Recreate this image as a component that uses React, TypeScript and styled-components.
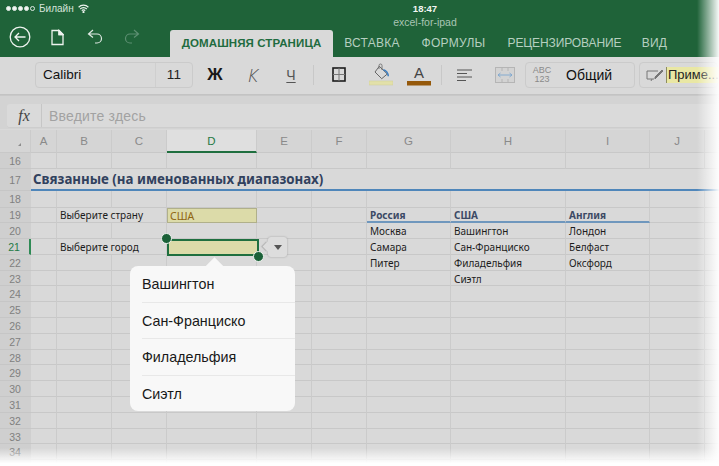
import React from "react";
import styled, { createGlobalStyle } from "styled-components";

const Global = createGlobalStyle`
  html, body { margin: 0; padding: 0; background: #fff; }
  body { width: 719px; height: 466px; overflow: hidden; font-family: "Liberation Sans", Arial, sans-serif; }
`;
const CELL_FONT = `"Noto Sans", "Open Sans", sans-serif`;

const Page = styled.div`
  position: relative; width: 719px; height: 466px; overflow: hidden; background: #d9d9d9;
  display: flex; flex-direction: column;
`;
const Header = styled.header`
  background: #1f6339; height: 57px; flex: none; color: #fff; display: flex; flex-direction: column;
`;
const StatusBar = styled.div`
  display: grid; grid-template-columns: 360px 130px; height: 29px; flex: none;
`;
const Carrier = styled.div`
  display: flex; align-items: center; gap: 4px; height: 17px; padding-left: 6px; font-size: 10px; color: #d5e3da;
`;
const Dots = styled.span`display: inline-flex; gap: 1px;`;
const Dot = styled.i<{ $empty?: boolean }>`
  width: 5px; height: 5px; border-radius: 50%; box-sizing: border-box; display: block;
  background: ${p => (p.$empty ? "transparent" : "#f2f6f3")};
  border: 1px solid #dfe9e3;
`;
const Center = styled.div`
  display: flex; flex-direction: column; align-items: center; padding-top: 3px;
`;
const Time = styled.div`font-size: 9.5px; line-height: 11px; font-weight: 700; color: #f3f7f4;`;
const DocName = styled.div`font-size: 10.5px; line-height: 13px; color: #a9c5b4; margin-top: 2px;`;
const ToolRow = styled.div`
  display: flex; align-items: flex-end; flex: 1; min-height: 0;
`;
const Tools = styled.div`
  display: flex; align-items: center; width: 170px; height: 28px; flex: none; padding-left: 9px; box-sizing: border-box; position: relative; top: -6px;
`;
const ToolIcon = styled.svg<{ $w: number; $mr: number }>`
  width: ${p => p.$w}px; height: 22px; margin-right: ${p => p.$mr}px; flex: none; display: block;
`;
const Tabs = styled.nav`display: flex; align-items: flex-end; height: 28px;`;
const Tab = styled.div<{ $active?: boolean; $w: number; $sp?: number }>`
  width: ${p => p.$w}px; height: 27px; box-sizing: border-box; display: flex; align-items: center; justify-content: center;
  font-size: ${p => (p.$active ? 11.5 : 12)}px; white-space: nowrap; letter-spacing: ${p => p.$sp ?? 0.25}px;
  border-radius: 3px 3px 0 0; padding-bottom: 1px;
  color: ${p => (p.$active ? "#1f6c40" : "#b6cfc0")};
  background: ${p => (p.$active ? "#d9d9d9" : "transparent")};
  font-weight: ${p => (p.$active ? 700 : 400)};
`;
const Ribbon = styled.div`
  height: 38px; flex: none; box-sizing: border-box; background: #d9d9d9; border-bottom: 1px solid #c3c3c3;
  display: flex; align-items: center; padding-left: 35px; padding-bottom: 2px; white-space: nowrap;
`;
const RBox = styled.div<{ $w: number; $ml?: number }>`
  width: ${p => p.$w}px; height: 26px; box-sizing: border-box; flex: none; border: 1px solid #cbcbcb; border-radius: 4px;
  display: flex; align-items: center; font-size: 13.5px; color: #111; margin-left: ${p => p.$ml ?? 0}px;
`;
const FontName = styled.span`width: 120px; padding-left: 7px; box-sizing: border-box; height: 100%; display: flex; align-items: center; border-right: 1px solid #cfcfcf;`;
const FontSize = styled.span`flex: 1; text-align: center; color: #222; letter-spacing: .3px;`;
const Glyph = styled.span<{ $w: number; $kind: "b" | "i" | "u" }>`
  width: ${p => p.$w}px; flex: none; text-align: center; line-height: 20px;
  font-size: ${p => (p.$kind === "u" ? 14 : p.$kind === "i" ? 18 : 17)}px;
  font-family: ${p => (p.$kind === "i" ? `"Open Sans", sans-serif` : "inherit")};
  font-weight: ${p => (p.$kind === "b" ? 700 : 300)};
  font-style: ${p => (p.$kind === "i" ? "italic" : "normal")};
  text-decoration: ${p => (p.$kind === "u" ? "underline" : "none")};
  text-underline-offset: 2px;
  color: ${p => (p.$kind === "b" ? "#1a1a1a" : "#555")};
`;
const VLine = styled.i<{ $ml: number; $mr: number }>`
  display: block; flex: none; width: 1px; height: 20px; background: #c8c8c8; margin: 0 ${p => p.$mr}px 0 ${p => p.$ml}px;
`;
const RIcon = styled.svg<{ $w: number; $ml?: number; $mr?: number }>`
  width: ${p => p.$w}px; height: 26px; flex: none; display: block;
  margin-left: ${p => p.$ml ?? 0}px; margin-right: ${p => p.$mr ?? 0}px;
`;
const AbcStack = styled.span`
  display: flex; flex-direction: column; align-items: center; width: 16px; margin-left: 8px; font-size: 9px; line-height: 8.5px; color: #8a8a8a;
`;
const General = styled.span`margin-left: 16px; font-size: 14px; color: #111;`;
const StyleName = styled.span`
  margin-left: 1px; background: #e9e7a4; font-size: 13px; line-height: 16px; color: #222; padding: 0 0 0 1px; border-left: 1px solid #8d8d60; flex: 1;
`;
const FormulaBar = styled.div`
  height: 34px; flex: none; box-sizing: border-box; background: #d3d3d3; padding: 8px 0 1px 7px; border-top: 1px solid #c8c8c8; display: flex;
`;
const FormulaBox = styled.div`
  flex: 1; background: #dadada; border-radius: 3px 0 0 3px; display: flex; align-items: center; border-bottom: 1px solid #cdcdcd;
`;
const Fx = styled.span`
  width: 35px; text-align: center; font-family: "Liberation Serif", serif; font-style: italic; font-size: 16px; color: #444;
  border-right: 1px solid #c6c6c6; height: 100%; line-height: 23px; box-sizing: border-box;
`;
const Placeholder = styled.span`margin-left: 7px; font-size: 14px; color: #a2a2a2; letter-spacing: .2px;`;

const Sheet = styled.div`
  display: grid; flex: none; margin-top: 1px;
  grid-template-columns: 31px 26px 55px 55px 90px 55px 55px 84px 115px 84px 55px 55px;
  grid-template-rows: 23px 15.5px 22.5px 16.5px repeat(17, 15.8px);
  font-family: ${CELL_FONT};
`;
const Col = styled.div<{ $on?: boolean }>`
  display: flex; align-items: center; justify-content: center; font-family: "Liberation Sans", sans-serif; font-size: 11.5px;
  box-sizing: border-box; border-right: 1px solid #cbcbcb;
  background: ${p => (p.$on ? "#dfdfdf" : "#d5d5d5")};
  color: ${p => (p.$on ? "#1f7a45" : "#8a8a8a")};
  border-bottom: ${p => (p.$on ? "2px solid #1f6f3f" : "1px solid #c8c8c8")};
`;
const Corner = styled(Col)`position: relative; background: #d5d5d5;`;
const CornerMark = styled.i`
  position: absolute; right: 9px; bottom: 6px; width: 0; height: 0; border-left: 3px solid transparent; border-bottom: 3px solid #8c8c8c;
`;
const RowNum = styled.div<{ $on?: boolean }>`
  display: flex; align-items: center; justify-content: center; font-family: "Liberation Sans", sans-serif; font-size: 10.5px;
  box-sizing: border-box; background: #cfcfcf; border-bottom: 1px solid #c6c6c6; padding: 1px 1px 0 0;
  color: ${p => (p.$on ? "#1f7a45" : "#808080")};
  border-right: ${p => (p.$on ? "2px solid #2f8a55" : "none")};
  height: 100%;
`;
const Cell = styled.div<{ $fill?: boolean; $title?: boolean; $line?: boolean; $noRight?: boolean; $head?: boolean; $gold?: boolean }>`
  box-sizing: border-box; min-width: 0; display: flex; align-items: center; white-space: nowrap; padding: 1px 0 0 3px;
  font-size: 10px; color: #1c1c1c;
  border-right: ${p => (p.$noRight ? "none" : "1px solid #cbcbcb")};
  border-bottom: 1px solid #c8c8c8;
  ${p => p.$fill && "background: #dcdba9; border: 1px solid #b0b08a;"}
  ${p => p.$gold && "color: #8f6510; font-size: 10.5px; padding-left: 2px;"}
  ${p => p.$head && "font-weight: 700; color: #3c4a65;"}
  ${p => p.$line && "border-bottom: 2px solid #6f97bd;"}
  ${p => p.$title && "font-weight: 700; font-size: 13.3px; color: #31415e; padding: 0 0 0 2px;"}
`;
const TitleCell = styled(Cell)`border-bottom: 2px solid #4f86ba; border-right: none;`;

const Selection = styled.div`
  position: absolute; left: 167px; top: 239px; width: 92px; height: 17px; box-sizing: border-box;
  border: 2px solid #1f6f3f; background: #dcdba9;
`;
const Handle = styled.i<{ $x: number; $y: number }>`
  position: absolute; left: ${p => p.$x}px; top: ${p => p.$y}px; width: 11px; height: 11px; box-sizing: border-box; border-radius: 50%;
  background: #1b6138; border: 1.5px solid #eef3ef;
`;
const DropBtn = styled.div`
  position: absolute; left: 268px; top: 237px; width: 19px; height: 20px; box-sizing: border-box; background: #dddddd; border-radius: 3px;
  box-shadow: 0 0 2px #9c9c9c; display: flex; align-items: center; justify-content: center;
  &::before {
    content: ""; position: absolute; left: -4px; top: 6px; width: 7px; height: 7px; background: #dddddd; transform: rotate(45deg);
    box-shadow: -1px 1px 1px #b0b0b0;
  }
  &::after { content: ""; position: relative; width: 0; height: 0; border: 4px solid transparent; border-top: 5px solid #555; border-bottom: 0; }
`;
const Popover = styled.ul`
  position: absolute; left: 130px; top: 266px; width: 165px; height: 145px; margin: 0; padding: 0; list-style: none;
  background: #f8f8f8; border-radius: 8px; display: flex; flex-direction: column; font-size: 14.3px; color: #181818;
  &::before {
    content: ""; position: absolute; left: 78px; top: -6px; width: 13px; height: 13px; background: #f8f8f8; transform: rotate(45deg);
  }
`;
const PopItem = styled.li`
  flex: 1; display: flex; align-items: center; margin-left: 12px; padding-top: 1px; position: relative; border-bottom: 1px solid #e8e8e8;
  &:last-child { border-bottom: none; }
`;
const FadeRight = styled.div`
  position: absolute; right: 0; top: 0; bottom: 0; width: 22px; background: linear-gradient(to right, rgba(255,255,255,0), rgba(255,255,255,0.97));
`;
const FadeBottom = styled.div`
  position: absolute; left: 0; right: 0; bottom: 0; height: 18px; background: linear-gradient(to bottom, rgba(255,255,255,0), #fff 85%);
`;

const cols = ["A", "B", "C", "D", "E", "F", "G", "H", "I", "J", ""];
const rows = Array.from({ length: 20 }, (_, i) => 16 + i);
type C = { t: string; head?: boolean };
const data: Record<string, C> = {
  "19B": { t: "Выберите страну" },
  "21B": { t: "Выберите город" },
  "19D": { t: "США" },
  "19G": { t: "Россия", head: true }, "19H": { t: "США", head: true }, "19I": { t: "Англия", head: true },
  "20G": { t: "Москва" }, "20H": { t: "Вашингтон" }, "20I": { t: "Лондон" },
  "21G": { t: "Самара" }, "21H": { t: "Сан-Франциско" }, "21I": { t: "Белфаст" },
  "22G": { t: "Питер" }, "22H": { t: "Филадельфия" }, "22I": { t: "Оксфорд" },
  "23H": { t: "Сиэтл" },
};
const cities = ["Вашингтон", "Сан-Франциско", "Филадельфия", "Сиэтл"];

const renderCell = (r: number, c: string) => {
  const key = `${r}${c}`;
  if (r === 17) return <TitleCell key={key} $title={c === "A"}>{c === "A" ? "Связанные (на именованных диапазонах)" : ""}</TitleCell>;
  const d = data[key];
  const inLine = r === 19 && (c === "G" || c === "H" || c === "I");
  return (
    <Cell key={key} $fill={key === "19D"} $gold={key === "19D"} $head={d?.head} $line={inLine}
      $noRight={c === "B" && (r === 19 || r === 21)}>
      {d?.t}
    </Cell>
  );
};

export default function App() {
  return (
    <Page>
      <Global />
      <Header>
        <StatusBar>
          <Carrier>
            <Dots><Dot /><Dot /><Dot /><Dot /><Dot $empty /></Dots>
            <span>Билайн</span>
            <svg width="11" height="9" viewBox="0 0 11 9" fill="none" stroke="#eef3ef" strokeWidth="1.2">
              <path d="M.6 3.2a7 7 0 0 1 9.8 0M2.2 5a4.6 4.6 0 0 1 6.6 0M3.8 6.7a2.2 2.2 0 0 1 3.4 0" />
              <circle cx="5.5" cy="8" r=".5" fill="#eef3ef" />
            </svg>
          </Carrier>
          <Center><Time>18:47</Time><DocName>excel-for-ipad</DocName></Center>
        </StatusBar>
        <ToolRow>
          <Tools>
            <ToolIcon $w={22} $mr={20} viewBox="0 0 22 22" fill="none" stroke="#eef3ef" strokeWidth="1.3">
              <circle cx="11" cy="11" r="9.8" />
              <path d="M16.500 11H6M10 7 6 11l4 4" />
            </ToolIcon>
            <ToolIcon $w={13} $mr={23} viewBox="0 0 13 22" fill="none" stroke="#eef3ef" strokeWidth="1.3">
              <path d="M1 4.500h7l4 4v10H1zM8 4.500v4h4" fill="none" />
              <path d="M8 4.500l4 4H8z" fill="#eef3ef" />
            </ToolIcon>
            <ToolIcon $w={16} $mr={21} viewBox="0 0 16 22" fill="none" stroke="#dfe9e3" strokeWidth="1.2">
              <path d="M6 4 1.500 8 6 11.500M1.500 8H10a4.500 4.500 0 0 1 4.500 4.500v0A4.500 4.500 0 0 1 10 17H8" />
            </ToolIcon>
            <ToolIcon $w={16} $mr={0} viewBox="0 0 16 22" fill="none" stroke="#5d8f72" strokeWidth="1.2">
              <path d="M10 4l4.500 4L10 11.500M14.500 8H6A4.500 4.500 0 0 0 1.500 12.500v0A4.500 4.500 0 0 0 6 17h2" />
            </ToolIcon>
          </Tools>
          <Tabs>
            <Tab $active $w={163} $sp={0.1}>ДОМАШНЯЯ СТРАНИЦА</Tab>
            <Tab $w={78}>ВСТАВКА</Tab>
            <Tab $w={85}>ФОРМУЛЫ</Tab>
            <Tab $w={137} $sp={-0.1}>РЕЦЕНЗИРОВАНИЕ</Tab>
            <Tab $w={43}>ВИД</Tab>
          </Tabs>
        </ToolRow>
      </Header>
      <Ribbon>
        <RBox $w={158}><FontName>Calibri</FontName><FontSize>11</FontSize></RBox>
        <Glyph $kind="b" $w={44}>Ж</Glyph>
        <Glyph $kind="i" $w={32}>К</Glyph>
        <Glyph $kind="u" $w={44}>Ч</Glyph>
        <VLine $ml={0} $mr={18} />
        <RIcon $w={14} $mr={23} viewBox="0 0 14 26" fill="none">
          <rect x="1" y="6" width="12" height="13" stroke="#1c1c1c" strokeWidth="1.6" />
          <path d="M7 6v13M1 12.500h12" stroke="#777" strokeWidth="1" />
        </RIcon>
        <RIcon $w={24} viewBox="0 0 24 26" fill="none">
          <path d="M10.300 4.300 6 10l6.700 6.700 5.600-4.700z" stroke="#666" strokeWidth="1" />
          <path d="M10 7V3.500a1.500 1.500 0 0 1 3 0V8" stroke="#666" strokeWidth=".8" />
          <path d="M14.300 7.700c3 .8 4.700 3.300 5 6.600" stroke="#3f7fc0" strokeWidth="1.500" />
          <rect y="19" width="24" height="4" fill="#e2e0a9" stroke="#cfcd98" strokeWidth=".5" />
        </RIcon>
        <RIcon $w={24} $ml={14} $mr={10} viewBox="0 0 24 26">
          <text x="12" y="16" textAnchor="middle" fontSize="15" fill="#444" fontFamily="Liberation Sans">A</text>
          <rect y="19" width="24" height="4.500" fill="#95590b" />
        </RIcon>
        <VLine $ml={0} $mr={15} />
        <RIcon $w={16} $mr={22} viewBox="0 0 16 26" stroke="#555" strokeWidth="1">
          <path d="M0 8h15M0 11.500h10M0 15h15M0 18.500h9" />
        </RIcon>
        <RIcon $w={20} $mr={10} viewBox="0 0 20 26" fill="none">
          <rect x=".5" y="5.500" width="19" height="15" fill="#d3d3d3" stroke="#b5b5b5" />
          <path d="M7 5.500V9M13 5.500V9M7 17v3.500M13 17v3.500" stroke="#b5b5b5" />
          <path d="M3 13h14M5.500 11 3 13l2.500 2M14.500 11 17 13l-2.500 2" stroke="#7ca6cf" strokeWidth=".9" />
        </RIcon>
        <RBox $w={110}>
          <AbcStack><span>ABC</span><span>123</span></AbcStack>
          <General>Общий</General>
        </RBox>
        <RBox $w={79} $ml={4}>
          <RIcon $w={19} $ml={6} viewBox="0 0 19 26" fill="none" stroke="#777" strokeWidth="1">
            <path d="M12 9H1v8h7M5 19l1-2" />
            <path d="M9 17l8-8-1-1-7 7z" fill="#777" />
          </RIcon>
          <StyleName>Приме...</StyleName>
        </RBox>
      </Ribbon>
      <FormulaBar>
        <FormulaBox><Fx>fx</Fx><Placeholder>Введите здесь</Placeholder></FormulaBox>
      </FormulaBar>
      <Sheet>
        <Corner><CornerMark /></Corner>
        {cols.map((c, i) => <Col key={i} $on={c === "D"}>{c}</Col>)}
        {rows.map(r => (
          <React.Fragment key={r}>
            <RowNum $on={r === 21}>{r < 35 ? r : ""}</RowNum>
            {cols.map((c, i) => renderCell(r, c || `x${i}`))}
          </React.Fragment>
        ))}
      </Sheet>
      <Selection />
      <Handle $x={161} $y={233} />
      <Handle $x={253} $y={251} />
      <DropBtn />
      <Popover>
        {cities.map(c => <PopItem key={c}>{c}</PopItem>)}
      </Popover>
      <FadeRight />
      <FadeBottom />
    </Page>
  );
}
